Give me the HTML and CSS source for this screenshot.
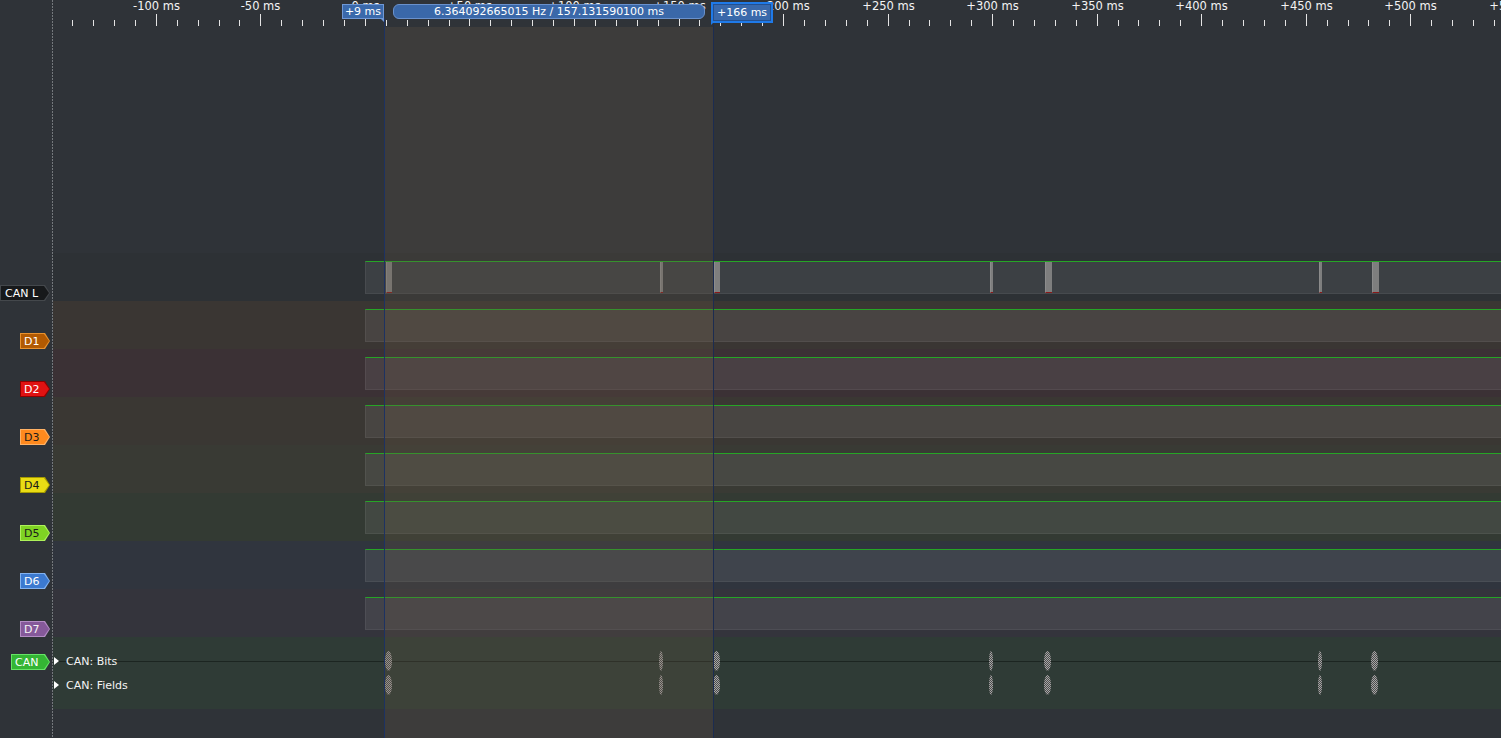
FILE: index.html
```html
<!DOCTYPE html>
<html>
<head>
<meta charset="utf-8">
<title>Logic</title>
<link rel="stylesheet" href="styles.css">
</head>
<body>
<div class="app">
  <aside class="gutter">
    <div class="g-top"></div>
    <div class="g-row"><span class="tag t-canl"><span>CAN L</span></span></div>
    <div class="g-row"><span class="tag t-d t-d1"><span>D1</span></span></div>
    <div class="g-row"><span class="tag t-d t-d2"><span>D2</span></span></div>
    <div class="g-row"><span class="tag t-d t-d3"><span>D3</span></span></div>
    <div class="g-row"><span class="tag t-d t-d4"><span>D4</span></span></div>
    <div class="g-row"><span class="tag t-d t-d5"><span>D5</span></span></div>
    <div class="g-row"><span class="tag t-d t-d6"><span>D6</span></span></div>
    <div class="g-row"><span class="tag t-d t-d7"><span>D7</span></span></div>
    <div class="g-row g-can"><span class="tag t-can"><span>CAN</span></span></div>
  </aside>
  <div class="dots"></div>
  <main class="wave">
    <div class="ruler">
      <svg width="1448" height="27" viewBox="0 0 1448 27">
        <path class="tick" d="M19.5 20v6M40.5 20v6M61.5 20v6M82.5 20v6M124.5 20v6M145.5 20v6M166.5 20v6M186.5 20v6M228.5 20v6M249.5 20v6M270.5 20v6M291.5 20v6M333.5 20v6M354.5 20v6M375.5 20v6M396.5 20v6M437.5 20v6M458.5 20v6M479.5 20v6M500.5 20v6M542.5 20v6M563.5 20v6M584.5 20v6M605.5 20v6M646.5 20v6M667.5 20v6M688.5 20v6M709.5 20v6M751.5 20v6M772.5 20v6M793.5 20v6M814.5 20v6M856.5 20v6M876.5 20v6M897.5 20v6M918.5 20v6M960.5 20v6M981.5 20v6M1002.5 20v6M1023.5 20v6M1065.5 20v6M1085.5 20v6M1106.5 20v6M1127.5 20v6M1169.5 20v6M1190.5 20v6M1211.5 20v6M1232.5 20v6M1274.5 20v6M1295.5 20v6M1315.5 20v6M1336.5 20v6M1378.5 20v6M1399.5 20v6M1420.5 20v6M1441.5 20v6"/>
        <path class="tick" d="M103.5 14v12M207.5 14v12M312.5 14v12M416.5 14v12M521.5 14v12M626.5 14v12M730.5 14v12M835.5 14v12M939.5 14v12M1044.5 14v12M1148.5 14v12M1253.5 14v12M1357.5 14v12"/>
        <g class="lbl">
          <text x="103.5" y="10">-100 ms</text>
          <text x="207.5" y="10">-50 ms</text>
          <text x="312.5" y="10">0 ms</text>
          <text x="416.5" y="10">+50 ms</text>
          <text x="521.5" y="10">+100 ms</text>
          <text x="626.5" y="10">+150 ms</text>
          <text x="730.5" y="10">+200 ms</text>
          <text x="835.5" y="10">+250 ms</text>
          <text x="939.5" y="10">+300 ms</text>
          <text x="1044.5" y="10">+350 ms</text>
          <text x="1148.5" y="10">+400 ms</text>
          <text x="1253.5" y="10">+450 ms</text>
          <text x="1357.5" y="10">+500 ms</text>
          <text x="1462.5" y="10">+550 ms</text>
        </g>
      </svg>
    </div>
    <div class="empty"></div>
    <div class="row r-canl">
      <div class="band">
        <span class="bar" style="left:20px;width:6px"></span>
        <span class="bar" style="left:294px;width:3px"></span>
        <span class="bar" style="left:348px;width:6px"></span>
        <span class="bar" style="left:624px;width:3px"></span>
        <span class="bar" style="left:679px;width:7px"></span>
        <span class="bar" style="left:953px;width:3px"></span>
        <span class="bar" style="left:1006px;width:7px"></span>
      </div>
    </div>
    <div class="row r-d1"><div class="band"></div></div>
    <div class="row r-d2"><div class="band"></div></div>
    <div class="row r-d3"><div class="band"></div></div>
    <div class="row r-d4"><div class="band"></div></div>
    <div class="row r-d5"><div class="band"></div></div>
    <div class="row r-d6"><div class="band"></div></div>
    <div class="row r-d7"><div class="band"></div></div>
    <div class="row r-can">
      <div class="sub sub-bits">
        <span class="exp"></span><span class="sub-name">CAN: Bits</span>
        <span class="blob" style="left:332px;width:7px"></span>
        <span class="blob" style="left:606px;width:4px"></span>
        <span class="blob" style="left:660px;width:7px"></span>
        <span class="blob" style="left:936px;width:4px"></span>
        <span class="blob" style="left:991px;width:7px"></span>
        <span class="blob" style="left:1265px;width:4px"></span>
        <span class="blob" style="left:1318px;width:7px"></span>
      </div>
      <div class="sub sub-fields">
        <span class="exp"></span><span class="sub-name">CAN: Fields</span>
        <span class="blob" style="left:332px;width:7px"></span>
        <span class="blob" style="left:606px;width:4px"></span>
        <span class="blob" style="left:660px;width:7px"></span>
        <span class="blob" style="left:936px;width:4px"></span>
        <span class="blob" style="left:991px;width:7px"></span>
        <span class="blob" style="left:1265px;width:4px"></span>
        <span class="blob" style="left:1318px;width:7px"></span>
      </div>
    </div>
    <div class="selection"></div>
    <div class="cursor c1"></div>
    <div class="cursor c2"></div>
    <div class="mk mk-a">+9 ms</div>
    <div class="pill">6.364092665015 Hz / 157.131590100 ms</div>
    <div class="mk mk-b">+166 ms</div>
  </main>
</div>
</body>
</html>
```

FILE: styles.css
```css
* { box-sizing: border-box; margin: 0; padding: 0; }
html, body { height: 100%; }
body {
  background: #2f3338;
  overflow: hidden;
  font-family: "DejaVu Sans", Verdana, sans-serif;
  font-size: 11px;
  color: #fff;
}
.app {
  display: grid;
  grid-template-columns: 52px 1px 1fr;
  height: 738px;
}

/* left gutter with channel tags */
.gutter { display: flex; flex-direction: column; }
.g-top { height: 253px; flex: none; }
.g-row {
  height: 48px;
  flex: none;
  display: flex;
  align-items: flex-end;
  justify-content: flex-end;
  padding-right: 2px;
}
.g-can { height: 72px; align-items: flex-start; padding-top: 17px; }

.tag {
  position: relative;
  display: flex;
  align-items: center;
  height: 16px;
  padding-left: 4px;
  padding-top: 1px;
  background: var(--b);
  color: var(--t);
  line-height: 15px;
  clip-path: polygon(0 0, calc(100% - 5px) 0, 100% 50%, calc(100% - 5px) 100%, 0 100%);
}
.tag::before {
  content: "";
  position: absolute;
  inset: 1px;
  background: var(--f);
  clip-path: polygon(0 0, calc(100% - 5px) 0, 100% 50%, calc(100% - 5px) 100%, 0 100%);
}
.tag span { position: relative; }
.t-canl { width: 50px; padding-left: 5px; --b: #44484c; --f: #17191b; --t: #fff; }
.t-d { width: 30px; }
.t-d1 { --b: #e8922e; --f: #b25a02; --t: #fff; }
.t-d2 { --b: #8e0000; --f: #e01212; --t: #fff; }
.t-d3 { --b: #ffb266; --f: #ff8a1e; --t: #1b1b1b; }
.t-d4 { --b: #a59a00; --f: #eadc14; --t: #1b1b1b; }
.t-d5 { --b: #aef25a; --f: #7fd323; --t: #1b1b1b; }
.t-d6 { --b: #82b2f0; --f: #3c7ad0; --t: #fff; }
.t-d7 { --b: #b38cc4; --f: #85599a; --t: #f4f4f4; }
.t-can { width: 39px; --b: #66e466; --f: #34b534; --t: #fff; }

.dots {
  background: repeating-linear-gradient(to bottom, #74787c 0 2px, transparent 2px 3px);
}

/* waveform area */
.wave {
  position: relative;
  display: flex;
  flex-direction: column;
  overflow: hidden;
}
.ruler { height: 27px; flex: none; }
.ruler svg { display: block; }
.tick { stroke: #e4e4e4; stroke-width: 1; fill: none; shape-rendering: crispEdges; }
.lbl text {
  fill: #f4f4f4;
  font-family: "DejaVu Sans", Verdana, sans-serif;
  font-size: 11.5px;
  text-anchor: middle;
}
.empty { height: 226px; flex: none; }

.row { height: 48px; flex: none; padding-top: 8px; }
.r-canl { background: rgba(0, 0, 0, 0.04); }
.r-d1 { background: #3a3633; }
.r-d2 { background: #3b3135; }
.r-d3 { background: #3a3733; }
.r-d4 { background: #393a34; }
.r-d5 { background: #333a33; }
.r-d6 { background: #30353e; }
.r-d7 { background: #34343c; }

.band {
  position: relative;
  margin-left: 312px;
  height: 33px;
  background: rgba(255, 255, 255, 0.075);
  border-top: 1px solid #26a526;
  border-bottom: 1px solid rgba(255, 255, 255, 0.05);
  border-left: 1px solid rgba(255, 255, 255, 0.06);
}
.bar {
  position: absolute;
  top: 0;
  bottom: 0;
  background: #7e7e7e;
  border-left: 1px solid #8c8c8c;
  border-bottom: 1px solid #8a1818;
}

.r-can { height: 72px; padding: 12px 0; background: #2f3b36; }
.sub {
  position: relative;
  height: 24px;
  display: flex;
  align-items: center;
  padding-left: 1px;
}
.sub-bits::before {
  content: "";
  position: absolute;
  left: 4px;
  right: 0;
  top: 12px;
  height: 1px;
  background: #1c2521;
}
.exp {
  position: relative;
  width: 0;
  height: 0;
  border-left: 5px solid #fff;
  border-top: 4px solid transparent;
  border-bottom: 4px solid transparent;
}
.sub-name { position: relative; margin-left: 7px; color: #f4f4f4; }
.blob {
  position: absolute;
  top: 2px;
  height: 20px;
  border-radius: 50%;
  background: repeating-conic-gradient(#a6a6a6 0 25%, #4c4c4c 0 50%) 0 0 / 2px 2px;
}

/* overlays */
.selection {
  position: absolute;
  left: 332px;
  width: 328px;
  top: 27px;
  bottom: 0;
  background: rgba(103, 87, 68, 0.25);
}
.cursor { position: absolute; width: 1px; bottom: 0; }
.c1 { left: 331px; top: 18px; background: #1d3262; }
.c2 { left: 660px; top: 24px; background: #1c2c50; }

.mk {
  position: absolute;
  height: 15px;
  line-height: 13px;
  text-align: center;
  background: #3a69ab;
  border: 1px solid #6f98d6;
  color: #fff;
  white-space: nowrap;
}
.mk-a { left: 289px; top: 4px; width: 42px; }
.mk-a::after {
  content: "";
  position: absolute;
  right: -1px;
  top: 100%;
  border-left: 4px solid transparent;
  border-top: 4px solid #6f98d6;
}
.mk-b {
  left: 658px;
  top: 2px;
  width: 62px;
  height: 21px;
  line-height: 17px;
  border: 2px solid #1f7ae8;
  box-shadow: inset 0 0 0 1px #24508f;
}
.mk-b::after {
  content: "";
  position: absolute;
  left: -2px;
  top: 100%;
  border-right: 4px solid transparent;
  border-top: 4px solid #1f7ae8;
}
.pill {
  position: absolute;
  left: 340px;
  top: 4px;
  width: 312px;
  height: 15px;
  line-height: 13px;
  border-radius: 6px;
  text-align: center;
  background: #3a68a9;
  border: 1px solid #6a91cc;
  color: #fff;
  white-space: nowrap;
}
```
